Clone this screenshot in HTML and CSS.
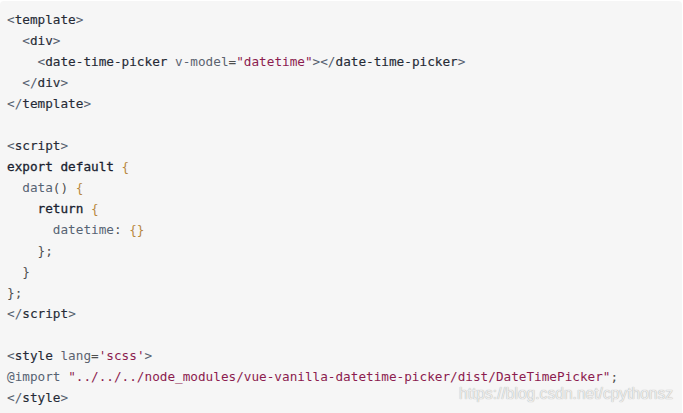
FILE: index.html
```html
<!DOCTYPE html>
<html>
<head>
<meta charset="utf-8">
<link rel="stylesheet" href="styles.css">
</head>
<body>
<div class="block">
<pre class="code"><span class="p">&lt;</span><span class="t">template</span><span class="p">&gt;</span>
  <span class="p">&lt;</span><span class="t">div</span><span class="p">&gt;</span>
    <span class="p">&lt;</span><span class="t">date-time-picker</span> <span class="a">v-model</span>=<span class="s">"datetime"</span><span class="p">&gt;&lt;/</span><span class="t">date-time-picker</span><span class="p">&gt;</span>
  <span class="p">&lt;/</span><span class="t">div</span><span class="p">&gt;</span>
<span class="p">&lt;/</span><span class="t">template</span><span class="p">&gt;</span>

<span class="p">&lt;</span><span class="t">script</span><span class="p">&gt;</span>
<span class="k">export</span> <span class="k">default</span> <span class="b">{</span>
  <span class="f">data</span>() <span class="b">{</span>
    <span class="k">return</span> <span class="b">{</span>
      <span class="f">datetime</span>: <span class="b">{}</span>
    };
  }
};
<span class="p">&lt;/</span><span class="t">script</span><span class="p">&gt;</span>

<span class="p">&lt;</span><span class="t">style</span> <span class="a">lang</span>=<span class="s">'scss'</span><span class="p">&gt;</span>
<span class="f">@import</span> <span class="s">"../../../node_modules/vue-vanilla-datetime-picker/dist/DateTimePicker"</span>;
<span class="p">&lt;/</span><span class="t">style</span><span class="p">&gt;</span></pre>
<span class="mark">https://blog.csdn.net/cpythonsz</span>
</div>
</body>
</html>
```
FILE: styles.css
```css
html, body {
  margin: 0;
  padding: 0;
  background: #ffffff;
}
.block {
  position: relative;
  margin: 1px 1px 0 0;
  background: #f6f6f6;
  border-radius: 4px;
  height: 430px;
}
.code {
  margin: 0;
  padding: 8px 7px;
  font-family: "DejaVu Sans Mono", "Liberation Mono", monospace;
  font-size: 12.7px;
  line-height: 21px;
  color: #4f4f4f;
}
.p { color: #55606e; }
.t { color: #262b36; -webkit-text-stroke: 0.15px #262b36; }
.a { color: #5c6370; }
.s { color: #8c1c4f; }
.k { color: #1a1f30; -webkit-text-stroke: 0.3px #1a1f30; }
.f { color: #566373; }
.b { color: #b8883e; }
.mark {
  position: absolute;
  left: 459px;
  top: 384px;
  font-family: "Liberation Sans", Arial, sans-serif;
  font-size: 15.6px;
  color: #ededed;
  text-shadow: 0 0 1px #9a9a9a;
}
```
